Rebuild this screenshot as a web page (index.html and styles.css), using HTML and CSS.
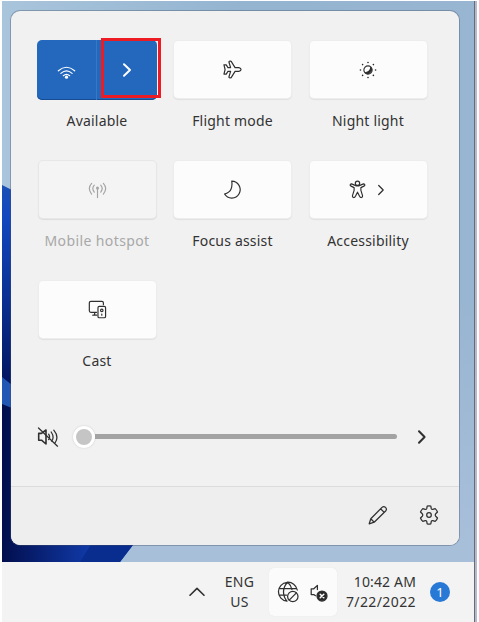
FILE: index.html
```html
<!DOCTYPE html>
<html lang="en">
<head>
<meta charset="utf-8">
<title>Quick settings</title>
<link rel="stylesheet" href="styles.css">
</head>
<body>
<div class="screen">
  <main class="desktop">
    <svg class="wallpaper" viewBox="0 0 472 561" preserveAspectRatio="none" aria-hidden="true">
      <defs>
        <linearGradient id="sky" x1="0" y1="0" x2="1" y2="0"><stop offset="0" stop-color="#a9c5dc"/><stop offset=".5" stop-color="#94b4d0"/><stop offset="1" stop-color="#98b5d1"/></linearGradient>
        <linearGradient id="low" x1="0" y1="300" x2="0" y2="545" gradientUnits="userSpaceOnUse"><stop offset="0" stop-color="#a8bfda" stop-opacity="0"/><stop offset="1" stop-color="#a8bfda"/></linearGradient>
        <linearGradient id="petal" x1="0" y1="184" x2="0" y2="385" gradientUnits="userSpaceOnUse"><stop offset="0" stop-color="#1b50b4"/><stop offset=".15" stop-color="#1348c0"/><stop offset=".5" stop-color="#0b3499"/><stop offset="1" stop-color="#021560"/></linearGradient>
        <linearGradient id="base" x1="0" y1="0" x2="100" y2="0" gradientUnits="userSpaceOnUse"><stop offset="0" stop-color="#020e4d"/><stop offset="1" stop-color="#1240b4"/></linearGradient>
      </defs>
      <rect width="472" height="561" fill="url(#sky)"/>
      <rect y="300" width="472" height="261" fill="url(#low)"/>
      <path d="M0 184 L10 189 V400 H0Z" fill="url(#petal)"/>
      <path d="M0 376 L10 384 V410 H0Z" fill="#2258b4"/>
      <path d="M0 403 L10 407 V540 H134 L118 561 H0Z" fill="url(#base)"/>
      <path d="M91 540 H134 L118 561 H78Z" fill="#092d8e"/>
    </svg>

    <section class="panel">
      <div class="tiles">
        <div class="cell">
          <div class="tile split">
            <div class="half first">
              <svg width="19" height="15" viewBox="0 0 20 16" class="light"><path d="M1.3 6.2Q10-1.4 18.7 6.2M4 8.9Q10 3.6 16 8.9M6.6 11.4Q10 8.4 13.4 11.4"/><circle cx="10" cy="13" r="1.7" class="dot"/></svg>
            </div>
            <div class="half second">
              <svg width="10" height="16" viewBox="0 0 10 16" class="light bold"><path d="M2 2.2 8 8 2 13.8"/></svg>
            </div>
          </div>
          <div class="label available">Available</div>
        </div>
        <div class="cell">
          <div class="tile">
            <svg width="19" height="19" viewBox="0 0 20 20"><path d="M1 5.2H3.4L5.2 8H8L6.3 2.4Q6 1 7.6 1.2L8.6 1.4 12.7 8H16.7Q19 8.5 19 10T16.7 12H12.7L8.6 18.6 7.6 18.8Q6 19 6.3 17.6L8 12H5.2L3.4 14.8H1L2.2 10Z"/></svg>
          </div>
          <div class="label">Flight mode</div>
        </div>
        <div class="cell">
          <div class="tile">
            <svg width="18" height="18" viewBox="0 0 20 20"><circle cx="10" cy="10" r="4.6"/><path d="M13 7Q13 12 7 13A4.3 4.3 0 0 0 13 7Z" class="solid"/><g class="solid noline"><circle cx="10" cy="1.6" r=".9"/><circle cx="10" cy="18.4" r=".9"/><circle cx="1.6" cy="10" r=".9"/><circle cx="18.4" cy="10" r=".9"/><circle cx="4" cy="4" r=".9"/><circle cx="16" cy="4" r=".9"/><circle cx="4" cy="16" r=".9"/><circle cx="16" cy="16" r=".9"/></g></svg>
          </div>
          <div class="label">Night light</div>
        </div>
        <div class="cell off">
          <div class="tile">
            <svg width="19" height="19" viewBox="0 0 20 20"><path d="M3.8 3.5Q-1 9 3.8 14.8M16.2 3.5Q21 9 16.2 14.8M6.6 5.4Q3.5 9 6.6 12.8M13.4 5.4Q16.5 9 13.4 12.8M10 9V18.5"/><circle cx="10" cy="8.5" r="1.6" class="dot"/></svg>
          </div>
          <div class="label hotspot">Mobile hotspot</div>
        </div>
        <div class="cell">
          <div class="tile">
            <svg width="19" height="19" viewBox="0 0 20 20"><path d="M9.2 1.2A8.9 8.9 0 1 1 1.6 14.8Q6.8 13.4 8.4 9.8Q10 6 9.2 1.2Z"/></svg>
          </div>
          <div class="label">Focus assist</div>
        </div>
        <div class="cell">
          <div class="tile pair">
            <svg width="17" height="19" viewBox="0 0 18 20"><circle cx="9" cy="3.4" r="2.3"/><path d="M6.5 5.6 2.7 4Q1.3 3.9 1.2 5.2 1.2 6 2.2 6.4L5.4 8V11L3.6 16.8Q3.4 18.1 4.8 18.5 6.2 18.6 6.7 17.3L9 12.8 11.3 17.3Q11.8 18.6 13.2 18.5 14.6 18.1 14.4 16.8L12.6 11V8L15.8 6.4Q16.8 6 16.8 5.2 16.7 3.9 15.3 4L11.5 5.6Q9 6.7 6.5 5.6Z"/></svg>
            <svg width="8" height="12" viewBox="0 0 8 12"><path d="M1.7 1.5 6.2 6 1.7 10.5"/></svg>
          </div>
          <div class="label">Accessibility</div>
        </div>
        <div class="cell">
          <div class="tile">
            <svg width="19" height="19" viewBox="0 0 20 20"><path d="M9 13H3Q1.4 13 1.4 11.4V3Q1.4 1.5 3 1.5H14.6Q16.2 1.5 16.2 3V5M7 13V15.7M5 16H9.3"/><rect x="10.5" y="6.7" width="8" height="12" rx="1.4"/><circle cx="14.5" cy="11" r="1.3"/><path d="M14.5 14.8V16"/></svg>
          </div>
          <div class="label">Cast</div>
        </div>
      </div>

      <div class="volume">
        <svg width="22" height="22" viewBox="0 0 22 22"><path d="M1.7 7.4H4.5L9 4V18L4.5 14.2H1.7Z" class="horn"/><path d="M1.5 2 20.5 20.2M11.6 8.2Q13.6 11 11.6 13.6M14.2 6Q17.6 11 14.8 15.4M16.8 4.2Q22.4 10.8 18 17"/></svg>
        <div class="slider"><div class="thumb"></div><div class="track"></div></div>
        <svg width="10" height="16" viewBox="0 0 10 16" class="bold"><path d="M2 2.2 7.6 8 2 13.8"/></svg>
      </div>

      <footer class="actions">
        <svg width="20" height="20" viewBox="0 0 20 20"><path d="M1.2 18.8 2.8 13.8 14 2.4Q15.8.7 17.5 2.4 19.3 4.2 17.6 6L6.2 17.2ZM12.6 3.8 16.2 7.4M2.8 13.8 6.2 17.2"/></svg>
        <svg width="20" height="20" viewBox="0 0 20 20"><path d="M8.2 1.2Q10 .7 11.8 1.2L12.3 3.7Q12.7 4.6 13.8 4.4L16.2 3.6Q17.8 5 18.5 7L16.7 8.8Q15.8 10 16.7 11.2L18.5 13Q17.8 15 16.2 16.4L13.8 15.6Q12.7 15.4 12.3 16.3L11.8 18.8Q10 19.3 8.2 18.8L7.7 16.3Q7.3 15.4 6.2 15.6L3.8 16.4Q2.2 15 1.5 13L3.3 11.2Q4.2 10 3.3 8.8L1.5 7Q2.2 5 3.8 3.6L6.2 4.4Q7.3 4.6 7.7 3.7Z"/><circle cx="10" cy="10" r="2.3"/></svg>
      </footer>
      <div class="highlight"></div>
    </section>
  </main>

  <nav class="taskbar">
    <svg class="overflow" width="16" height="10" viewBox="0 0 16 10"><path d="M1 8.2 8 1.4 15 8.2"/></svg>
    <div class="lang">ENG<br>US</div>
    <div class="tray">
      <svg width="22" height="22" viewBox="0 0 22 22"><path d="M10 20.2A9.5 9.5 0 1 1 20.3 9M10 20.2Q6.5 16 6.5 10.7T10.7 1.2Q14.2 4.3 14.9 8.5M2 7.5H19.6M2 14H9.5"/><circle cx="15.8" cy="15.5" r="5.2"/><path d="M12.2 19.1 19.4 11.9"/></svg>
      <svg width="20" height="20" viewBox="0 0 20 20"><path d="M6.5 13.7 4.8 12.5H2.2V6.8H4.8L8.4 3.4V7.6"/><circle cx="13" cy="14" r="5" class="dark"/><path d="M11.2 12.2 14.8 15.8M14.8 12.2 11.2 15.8" class="light cross"/></svg>
    </div>
    <div class="clock"><div class="time">10:42 AM</div><div class="date">7/22/2022</div></div>
    <div class="badge">1</div>
  </nav>
</div>
</body>
</html>
```
FILE: styles.css
```css
* { box-sizing: border-box; }
html, body { margin: 0; height: 100%; }
body { overflow: hidden; background: #fff; font: 14px/20px "Noto Sans", "Open Sans", sans-serif; color: #333; }
svg { display: block; flex: none; fill: none; stroke: #303030; stroke-width: 1.25; stroke-linecap: round; stroke-linejoin: round; }
.solid, .dark { fill: #292929; }
.noline { stroke: none; }
.light { stroke: #fff; }
.light .dot { fill: #fff; stroke: none; }
.bold { stroke-width: 2; }
.horn { stroke-width: 1.6; }
.cross { stroke-width: 1.5; }

.screen { margin: 1px 0 0 2px; width: 475px; height: 621px; border-right: 2px solid #b7b8c8; box-shadow: inset -1px 0 #666b78; display: flex; flex-direction: column; }
.desktop { position: relative; width: 472px; height: 561px; padding: 10px 13px 0 9px; }
.wallpaper { position: absolute; left: 0; top: 0; width: 472px; height: 561px; stroke: none; }
.panel { position: relative; width: 448px; height: 534px; border-radius: 9px; background: #f1f1f1; overflow: hidden; box-shadow: 0 0 0 1px rgba(65, 80, 100, .38); display: flex; flex-direction: column; }

.tiles { padding: 29px 0 0 27px; display: grid; grid-template-columns: repeat(3, 118px); grid-auto-rows: 120px; column-gap: 17.5px; height: 389px; }
.cell { display: flex; flex-direction: column; align-items: center; }
.tile { width: 117px; height: 57px; margin-top: 1px; border-radius: 4px; background: #fcfcfc; box-shadow: 0 0 0 1px #ededed, 0 1px 1px 1px #e0e0e0; display: flex; align-items: center; justify-content: center; }
.tile.pair { gap: 11px; padding-right: 2px; }
.label { margin-top: 13px; white-space: nowrap; letter-spacing: .2px; }
.off .tile { background: #f4f4f4; box-shadow: 0 0 0 1px #e7e7e7, 0 1px 1px 1px #dcdcdc; }
.off .label { color: #a8a8a8; }
.hotspot { letter-spacing: .4px; }
.off svg { stroke: #a5a5a5; }
.off .dot { fill: #a5a5a5; stroke: none; }
.split { width: 120px; height: 60px; margin-top: 0; border-radius: 5px; background: #2468be; box-shadow: inset 0 -1px #174c92; overflow: hidden; }
.split + .label { margin-top: 11px; }
.half { display: flex; align-items: center; justify-content: center; height: 100%; }
.first { width: 60px; border-right: 1px solid #3677c7; padding-top: 4px; }
.second { width: 60px; }

.volume { height: 86px; padding: 0 31px 13px 26px; display: flex; align-items: center; }
.slider { width: 324px; margin: 0 20px 0 14px; display: flex; align-items: center; }
.thumb { width: 22px; height: 22px; border-radius: 50%; border: 3px solid #fff; background: #c5c5c5; box-shadow: 0 0 2px #c8c8c8; }
.track { flex: 1; height: 5px; border-radius: 0 3px 3px 0; background: #a3a3a3; }
.actions { height: 59px; border-top: 1px solid #dcdcdc; background: #eee; display: flex; align-items: center; justify-content: flex-end; gap: 31px; padding: 0 20px 3px 0; }
.highlight { position: absolute; left: 90px; top: 27px; width: 60px; height: 60px; border: 3px solid #ed1c24; }

.taskbar { width: 472px; height: 60px; background: #f3f3f3; display: flex; align-items: center; }
.overflow { margin-left: 187px; stroke-width: 1.6; }
.lang { width: 33px; margin-left: 18px; text-align: center; line-height: 20px; white-space: nowrap; letter-spacing: .3px; }
.tray { width: 68px; height: 48px; margin-left: 13px; border-radius: 5px; background: #fbfbfb; box-shadow: 0 0 1px #ddd; display: flex; align-items: center; gap: 10px; padding-left: 8px; }
.clock { width: 71px; margin-left: 8px; text-align: right; line-height: 20px; white-space: nowrap; }
.time { letter-spacing: .15px; }
.date { letter-spacing: .4px; }
.badge { width: 20px; height: 20px; margin-left: 14px; border-radius: 50%; background: #2878d6; color: #fff; text-align: center; font-size: 13px; line-height: 20px; }
```
